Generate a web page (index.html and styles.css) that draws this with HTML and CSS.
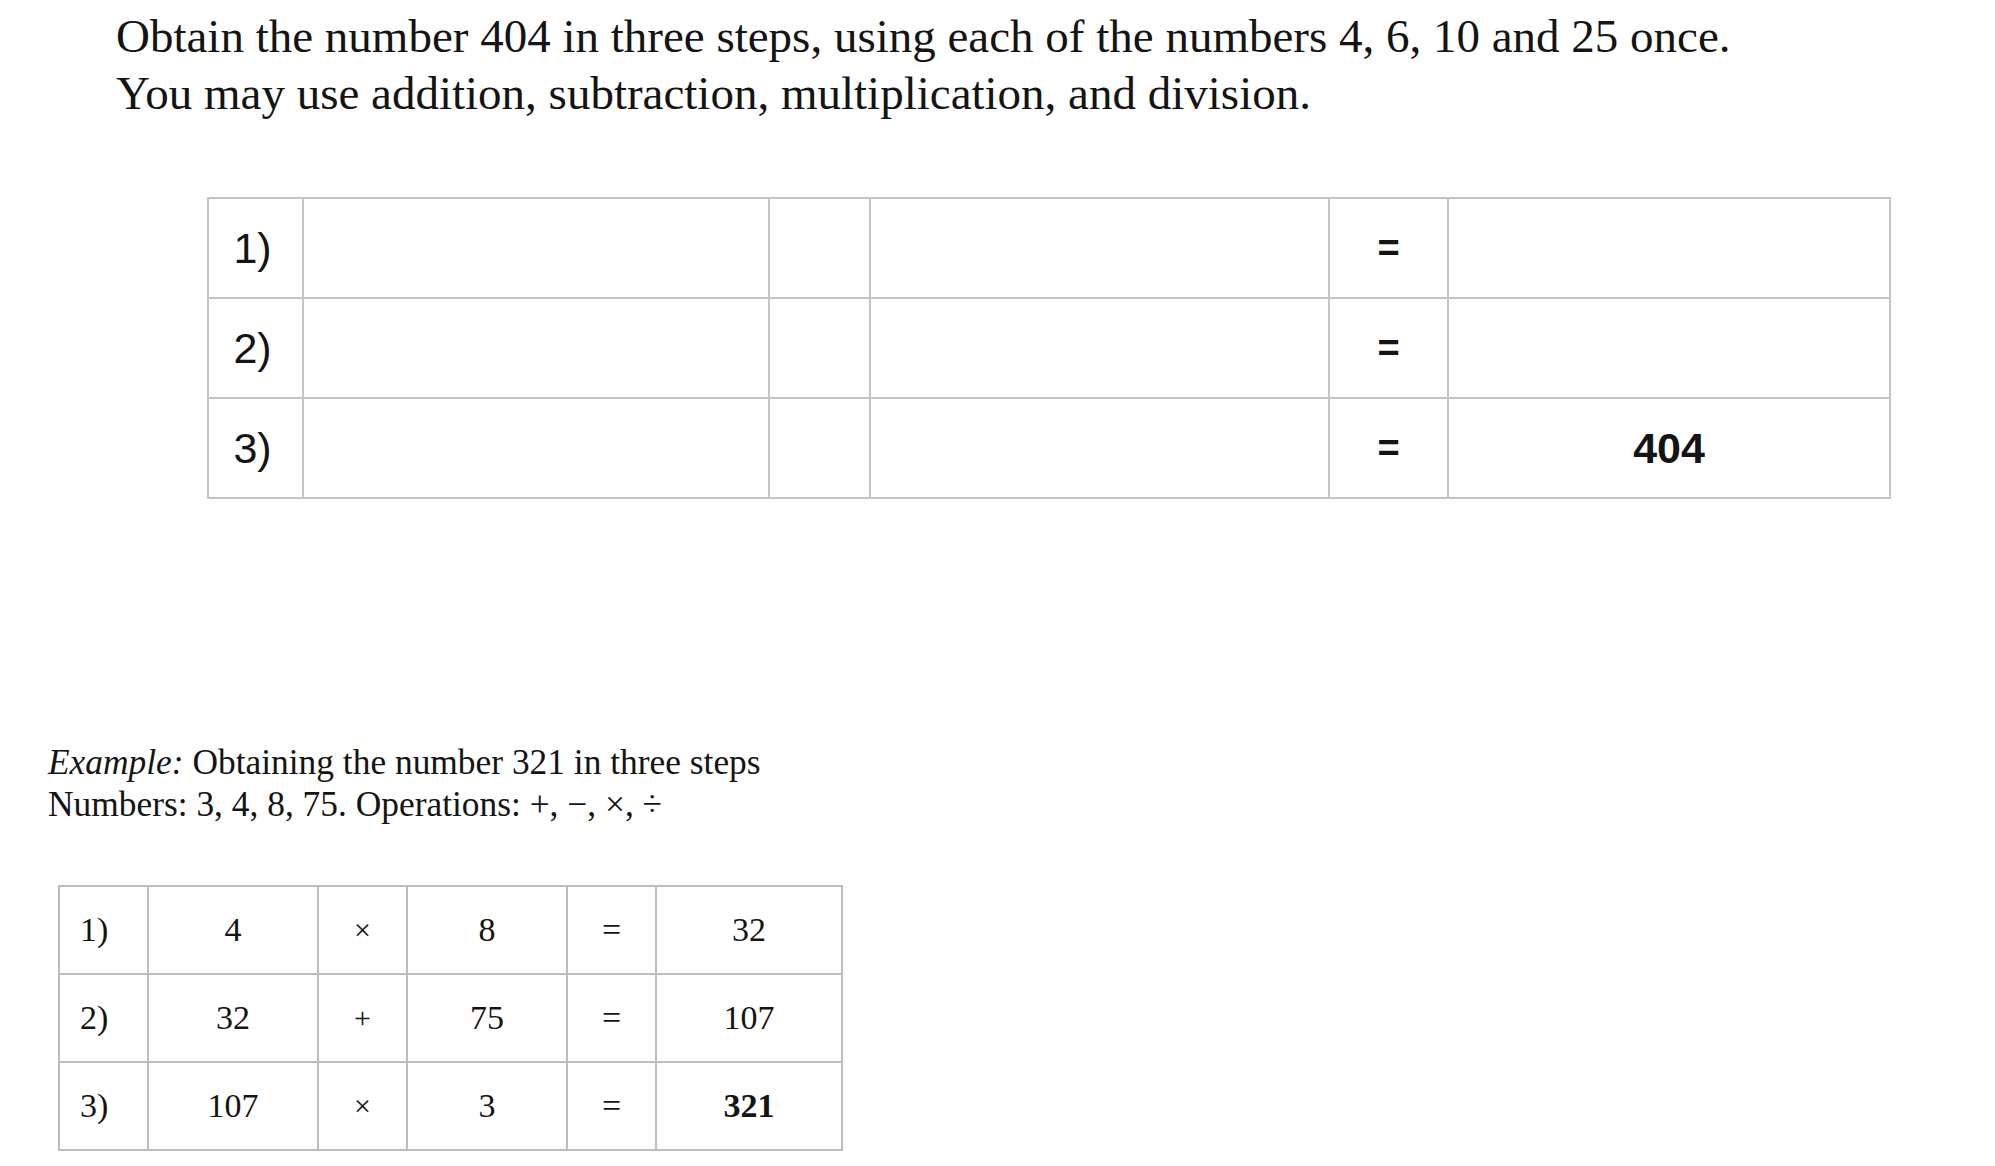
FILE: index.html
```html
<!DOCTYPE html>
<html lang="en">
<head>
<meta charset="utf-8">
<title>Obtain 404</title>
<link rel="stylesheet" href="styles.css">
</head>
<body>
<div class="page">
  <div class="task">
    <p class="line">Obtain the number 404 in three steps, using each of the numbers 4, 6, 10 and 25 once.</p>
    <p class="line">You may use addition, subtraction, multiplication, and division.</p>
  </div>

  <table class="grid big">
    <colgroup>
      <col class="b1"><col class="b2"><col class="b3"><col class="b4"><col class="b5"><col class="b6">
    </colgroup>
    <tr><td class="lab">1)</td><td></td><td></td><td></td><td class="eq">=</td><td></td></tr>
    <tr><td class="lab">2)</td><td></td><td></td><td></td><td class="eq">=</td><td></td></tr>
    <tr><td class="lab">3)</td><td></td><td></td><td></td><td class="eq">=</td><td class="res">404</td></tr>
  </table>

  <div class="example">
    <p class="eline"><em>Example:</em> Obtaining the number 321 in three steps</p>
    <p class="eline">Numbers: 3, 4, 8, 75. Operations: +, −, ×, ÷</p>
  </div>

  <table class="grid small">
    <colgroup>
      <col class="s1"><col class="s2"><col class="s3"><col class="s4"><col class="s5"><col class="s6">
    </colgroup>
    <tr><td class="num">1)</td><td>4</td><td class="op">×</td><td>8</td><td>=</td><td>32</td></tr>
    <tr><td class="num">2)</td><td>32</td><td class="op">+</td><td>75</td><td>=</td><td>107</td></tr>
    <tr><td class="num">3)</td><td>107</td><td class="op">×</td><td>3</td><td>=</td><td class="res">321</td></tr>
  </table>
</div>
</body>
</html>
```

FILE: styles.css
```css
html, body {
  margin: 0;
  padding: 0;
  background: #ffffff;
}

.page {
  display: flex;
  flex-direction: column;
  align-items: flex-start;
  padding-top: 8px;
  color: #141414;
}

.task {
  margin-left: 116px;
  font-family: "Liberation Serif", "Times New Roman", serif;
  font-size: 47px;
  line-height: 57px;
}

.line {
  margin: 0;
  white-space: nowrap;
}

.grid {
  border-collapse: collapse;
  table-layout: fixed;
}

.grid td {
  padding: 0;
  text-align: center;
  vertical-align: middle;
}

.big {
  margin-left: 207px;
  margin-top: 75px;
  width: 1682px;
  font-family: "Liberation Sans", Arial, sans-serif;
  font-size: 40px;
}

.big td {
  border: 2px solid #c4c4c4;
  height: 98px;
}

.b1 { width: 95px; }
.b2 { width: 466px; }
.b3 { width: 101px; }
.b4 { width: 459px; }
.b5 { width: 119px; }
.b6 { width: 442px; }

.big .lab {
  font-size: 43px;
  padding-right: 6px;
}

.big .eq {
  font-weight: bold;
  font-size: 38px;
}

.big .res {
  font-weight: bold;
  font-size: 43px;
}

.example {
  margin-left: 48px;
  margin-top: 242px;
  font-family: "Liberation Serif", "Times New Roman", serif;
  font-size: 35.4px;
  line-height: 42px;
}

.eline {
  margin: 0;
  white-space: nowrap;
}

.small {
  margin-left: 58px;
  margin-top: 60px;
  width: 783px;
  font-family: "Liberation Serif", "Times New Roman", serif;
  font-size: 34px;
}

.small td {
  border: 2px solid #bdbdbd;
  height: 86px;
}

.s1 { width: 89px; }
.s2 { width: 170px; }
.s3 { width: 89px; }
.s4 { width: 160px; }
.s5 { width: 89px; }
.s6 { width: 186px; }

.small .num {
  text-align: left;
  padding-left: 20px;
}

.small .op {
  font-size: 30px;
}

.small .res {
  font-weight: bold;
}
```
